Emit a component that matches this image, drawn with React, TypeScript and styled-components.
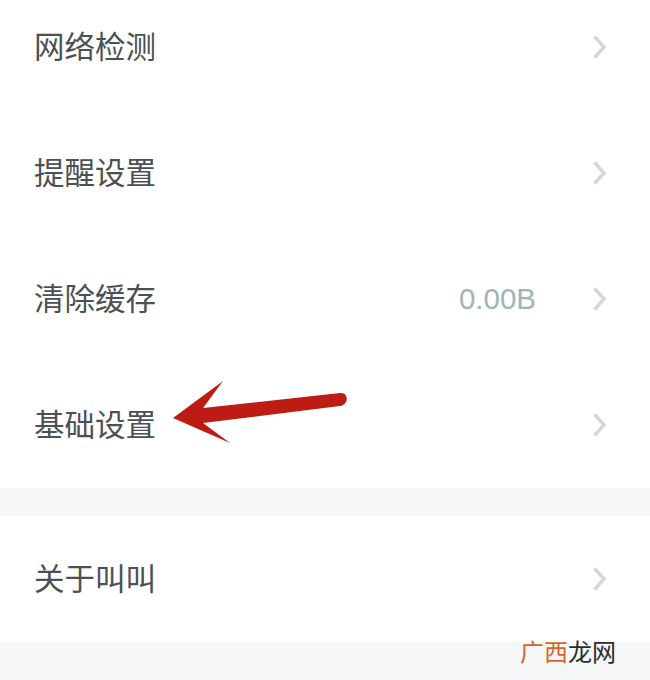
import * as React from "react";
import styled, { createGlobalStyle } from "styled-components";

const GlobalStyle = createGlobalStyle`
  html, body {
    margin: 0;
    padding: 0;
    background: #fff;
  }
`;

const Page = styled.div`
  position: relative;
  width: 650px;
  height: 680px;
  overflow: hidden;
  background: #fff;
  font-family: "Noto Sans CJK SC", "Noto Sans", sans-serif;
`;

const List = styled.div`
  display: flex;
  flex-direction: column;
  margin-top: -16px;
`;

const Row = styled.div`
  display: flex;
  align-items: center;
  height: 126px;
  padding: 0 43px 0 34px;
  box-sizing: border-box;
`;

const Label = styled.span`
  flex: 1;
  padding-bottom: 4px;
  font-size: 30.5px;
  line-height: 1;
  color: #4b5054;
`;

const Value = styled.span`
  margin-right: 56px;
  font-family: "Liberation Sans", Arial, sans-serif;
  font-size: 29.5px;
  line-height: 1;
  color: #9fb4b7;
`;

const Band = styled.div<{ $height: number }>`
  height: ${(p) => p.$height}px;
  background: #f6f7f9;
`;

const Arrow = styled.svg`
  position: absolute;
  left: 170px;
  top: 378px;
`;

const Watermark = styled.div`
  position: absolute;
  left: 520px;
  top: 636px;
  font-size: 24px;
  line-height: 30px;
  color: #2b2b2b;

  span {
    color: #d9642a;
  }
`;

const Chevron = () => (
  <svg width="15" height="26" viewBox="0 0 15 26" fill="none">
    <path d="M2.5 2.5 L12 13 L2.5 23.5" stroke="#d4d6d7" strokeWidth="3.4" />
  </svg>
);

const items = [
  { label: "网络检测" },
  { label: "提醒设置" },
  { label: "清除缓存", value: "0.00B" },
  { label: "基础设置" },
];

export default function App() {
  return (
    <Page>
      <GlobalStyle />
      <List>
        {items.map((item) => (
          <Row key={item.label}>
            <Label>{item.label}</Label>
            {item.value && <Value>{item.value}</Value>}
            <Chevron />
          </Row>
        ))}
        <Band $height={28} />
        <Row>
          <Label>关于叫叫</Label>
          <Chevron />
        </Row>
        <Band $height={38} />
      </List>
      <Arrow width="182" height="68" viewBox="0 0 182 68" fill="none">
        <path
          d="M3 40 L53 3 L33 30 L170 15 C179 14 179 27 170 28 L33 45 L60 65 Z"
          fill="#bd1c14"
        />
      </Arrow>
      <Watermark>
        <span>广西</span>龙网
      </Watermark>
    </Page>
  );
}
